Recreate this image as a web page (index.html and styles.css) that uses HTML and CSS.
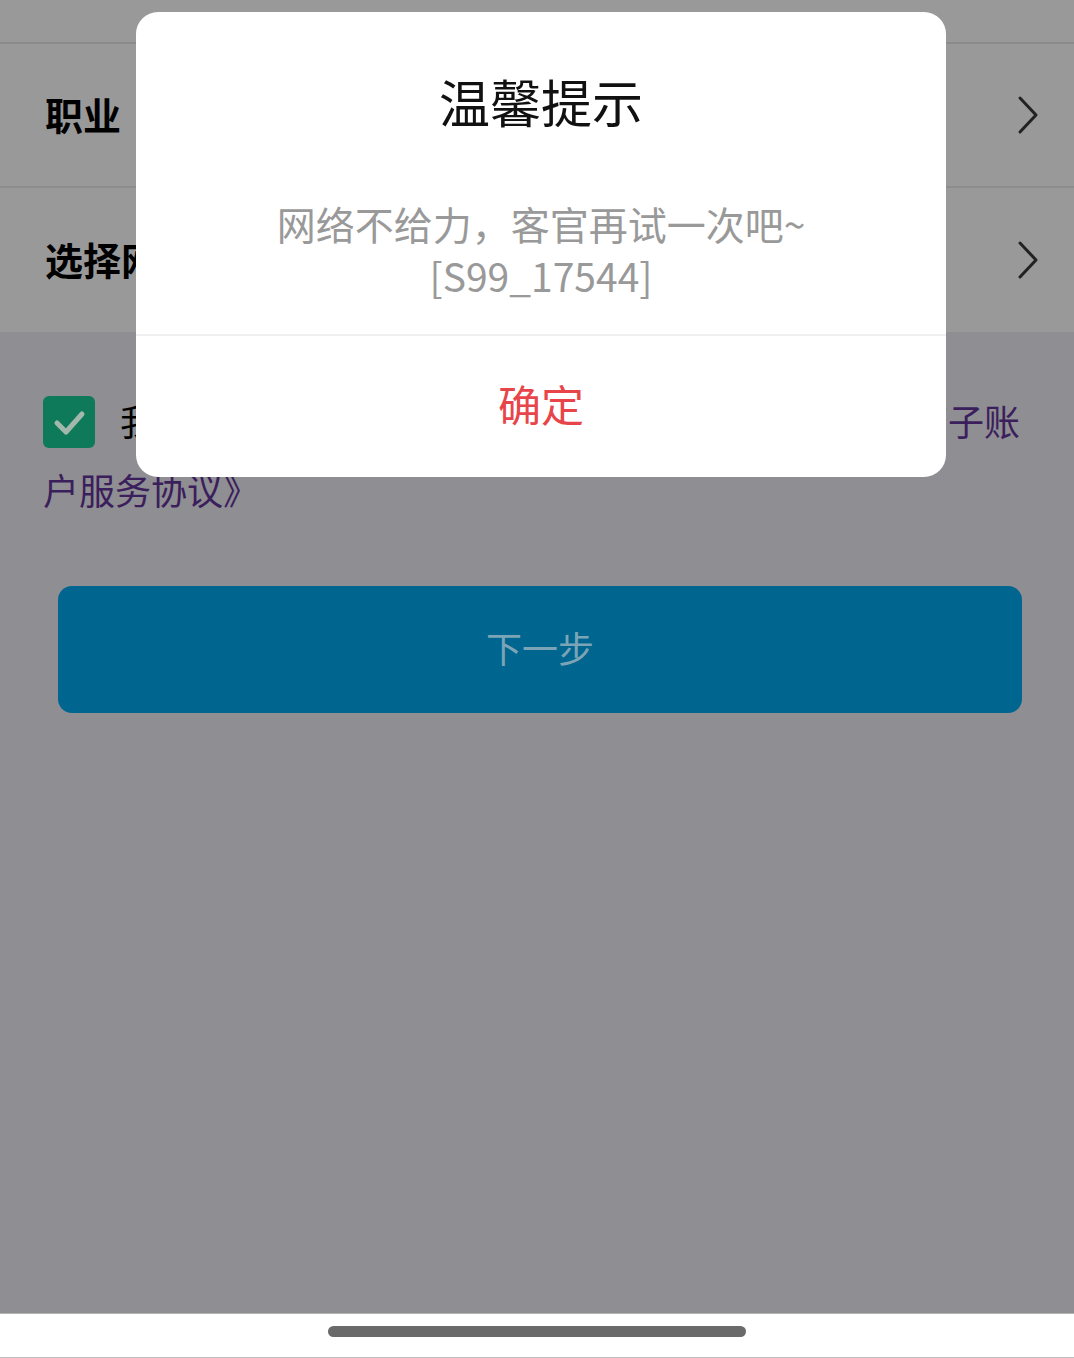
FILE: index.html
```html
<!DOCTYPE html>
<html lang="zh-CN">
<head>
  <meta charset="UTF-8" />
  <meta name="viewport" content="width=device-width, initial-scale=1.0" />
  <title>开户信息</title>
  <link rel="stylesheet" href="styles.css">
</head>
<body>
  <div class="screen">
    <div class="form">
      <div class="form-top"></div>
      <div class="row">
        <span class="row-label">职业</span>
        <svg class="chevron" viewBox="0 0 24 40" width="24" height="40">
          <polyline points="4,3 20,20 4,37" fill="none" stroke="#222" stroke-width="3" stroke-linecap="round" stroke-linejoin="round" />
        </svg>
      </div>
      <div class="row">
        <span class="row-label">选择网点</span>
        <svg class="chevron" viewBox="0 0 24 40" width="24" height="40">
          <polyline points="4,3 20,20 4,37" fill="none" stroke="#222" stroke-width="3" stroke-linecap="round" stroke-linejoin="round" />
        </svg>
      </div>
    </div>

    <p class="agree">
      <span class="checkbox">
        <svg viewBox="0 0 52 52" width="52" height="52">
          <polyline points="14,27 23,36 39,18" fill="none" stroke="#a3b8ad" stroke-width="5" stroke-linecap="round" stroke-linejoin="round" />
        </svg>
      </span>我已阅读并同意<span class="link">《证券资金账户在线开立与三方存管子账<br>户服务协议》</span>
    </p>

    <button class="next-btn">下一步</button>

    <div class="spacer"></div>

    <div class="home-area">
      <div class="home-bar"></div>
    </div>

    <!-- alert dialog over the page -->
    <div class="dialog">
      <div class="dialog-body">
        <h2 class="dialog-title">温馨提示</h2>
        <p class="dialog-msg">网络不给力，客官再试一次吧~<br>[S99_17544]</p>
      </div>
      <div class="dialog-btn">确定</div>
    </div>
  </div>
</body>
</html>
```

FILE: styles.css
```css
html, body {
  margin: 0;
  padding: 0;
  font-family: "Noto Sans CJK SC", "Noto Sans", sans-serif;
}

.screen {
  position: relative;
  width: 1074px;
  height: 1358px;
  background: #8f8e93;
  display: flex;
  flex-direction: column;
  overflow: hidden;
}

.form {
  background: #999999;
}

.form-top {
  height: 42px;
  border-bottom: 2px solid #8b8b8b;
}

.row {
  height: 142px;
  padding: 0 34px 0 45px;
  display: flex;
  align-items: center;
  justify-content: space-between;
  border-bottom: 2px solid #8d8d8d;
}

.row:last-child {
  border-bottom: none;
  height: 144px;
}

.row-label {
  font-size: 38px;
  font-weight: 700;
  color: #000;
  margin-top: -4px;
}

.chevron {
  display: block;
}

.agree {
  margin: 54px 0 0;
  padding: 0 40px 0 43px;
  font-size: 36px;
  line-height: 69px;
  color: #000;
  white-space: nowrap;
}

.checkbox {
  display: inline-block;
  width: 52px;
  height: 52px;
  margin-right: 25px;
  background: #0e7a59;
  border-radius: 6px;
  vertical-align: -12px;
}

.checkbox svg {
  display: block;
}

.link {
  color: #3b1f5c;
}

.next-btn {
  margin: 62px 52px 0 58px;
  height: 127px;
  padding-bottom: 6px;
  border: none;
  border-radius: 14px;
  background: #00668f;
  color: #7ba4b7;
  font-family: inherit;
  font-size: 36px;
}

.spacer {
  flex: 1;
}

.home-area {
  height: 45px;
  background: #fff;
  border-top: 1px solid #b3b3b3;
  border-bottom: 1px solid #bdbdbd;
  display: flex;
  justify-content: center;
  padding-top: 12px;
  box-sizing: border-box;
}

.home-bar {
  width: 418px;
  height: 11px;
  border-radius: 6px;
  background: #6a6a6a;
}

.dialog {
  position: absolute;
  left: 136px;
  top: 12px;
  width: 810px;
  background: #fff;
  border-radius: 22px;
  text-align: center;
  overflow: hidden;
}

.dialog-body {
  padding: 59px 20px 33px;
  border-bottom: 2px solid #efefef;
}

.dialog-title {
  margin: 0;
  font-size: 51px;
  line-height: 60px;
  font-weight: 400;
  color: #111;
}

.dialog-msg {
  margin: 66px 0 0;
  font-size: 39px;
  line-height: 52px;
  color: #999;
}

.dialog-btn {
  height: 141px;
  padding-bottom: 8px;
  box-sizing: border-box;
  display: flex;
  align-items: center;
  justify-content: center;
  font-size: 43px;
  color: #e8454b;
}
```
